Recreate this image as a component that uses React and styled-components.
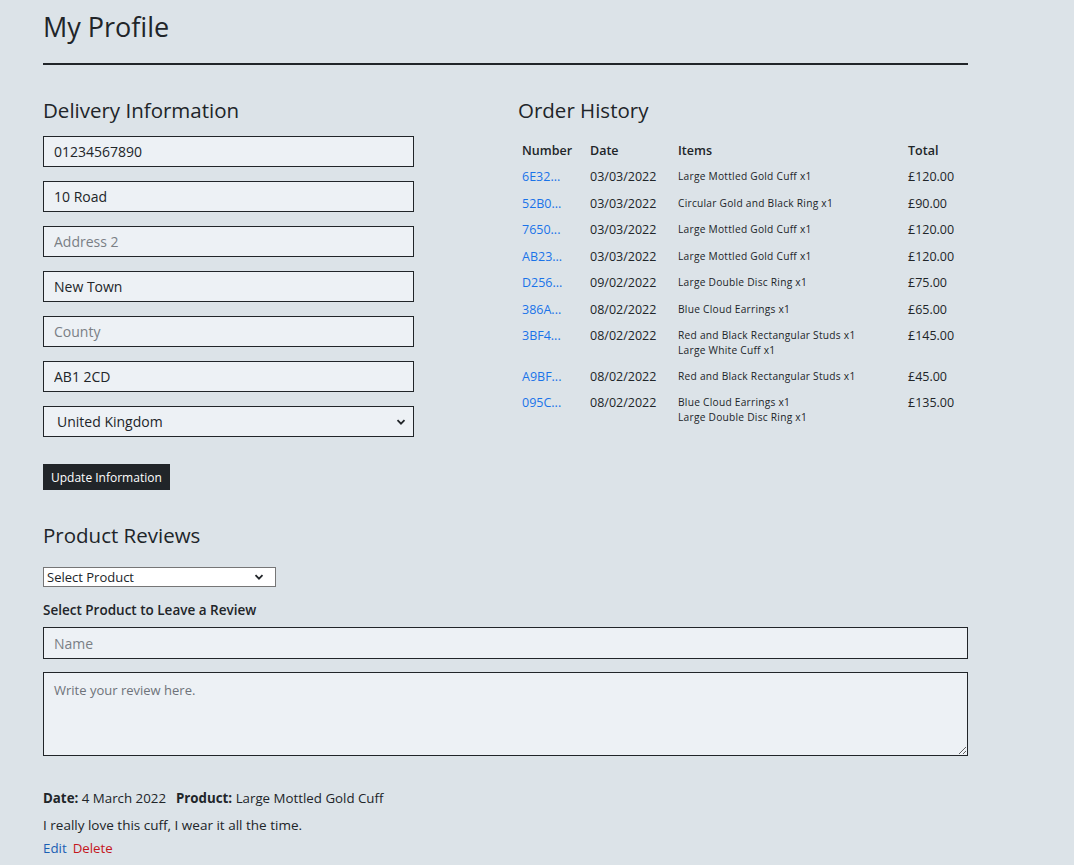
import React from 'react';
import styled, { createGlobalStyle } from 'styled-components';

const GlobalStyle = createGlobalStyle`
  body {
    margin: 0;
    background: #dce3e8;
    font-family: "Open Sans", "Noto Sans", sans-serif;
    color: #212529;
  }
`;

const Page = styled.div`
  width: 925px;
  padding: 8px 0 0 43px;
`;

const Title = styled.h1`
  font-size: 27px;
  font-weight: 400;
  margin: 0;
  line-height: 38px;
`;

const Rule = styled.hr`
  border: 0;
  border-top: 2px solid #212529;
  margin: 17px 0 0;
  opacity: 1;
`;

const Columns = styled.div`
  display: grid;
  grid-template-columns: 475px 1fr;
`;

const Heading = styled.h2`
  font-size: 20.5px;
  font-weight: 400;
  margin: ${p => p.$top || 31}px 0 0;
  line-height: 28px;
`;

const Form = styled.div`
  display: flex;
  flex-direction: column;
  gap: 14px;
  margin-top: 12px;
  width: 371px;
`;

const Field = styled.input`
  box-sizing: border-box;
  width: ${p => p.$wide ? '100%' : '371px'};
  height: ${p => p.$wide ? 32 : 31}px;
  border: 1px solid #212529;
  background: #edf1f5;
  padding: 0 10px;
  font: 14px "Open Sans", sans-serif;
  color: #212529;
  outline: none;
  &::placeholder { color: #7a7f85; }
`;

const Chevron = () => (
  <svg width="12" height="12" viewBox="0 0 12 12">
    <path d="M2.5 4.2 L6 7.7 L9.5 4.2" fill="none" stroke="#212529" strokeWidth="1.8" />
  </svg>
);

const SelectBox = styled.div`
  box-sizing: border-box;
  display: flex;
  align-items: center;
  justify-content: space-between;
  width: ${p => p.$small ? '233px' : '371px'};
  height: ${p => p.$small ? 20 : 31}px;
  border: 1px solid ${p => p.$small ? '#767676' : '#212529'};
  background: ${p => p.$small ? '#ffffff' : '#edf1f5'};
  padding: ${p => p.$small ? '0 10px 0 3px' : '0 6px 0 13px'};
  font-size: ${p => p.$small ? 13 : 14}px;
  color: #212529;
`;

const Button = styled.button`
  align-self: flex-start;
  margin-top: 13px;
  height: 26px;
  padding: 0 8px;
  border: 0;
  background: #212529;
  color: #fff;
  font: 12px "Open Sans", sans-serif;
`;

const Table = styled.table`
  margin-top: 13px;
  width: 450px;
  border-collapse: collapse;
  font-size: 12.5px;
  th {
    text-align: left;
    font-weight: 600;
    padding: 5px 4px 5px;
    font-size: 12.5px;
  }
  td {
    vertical-align: top;
    padding: 4px 4px 5.5px;
    line-height: 17px;
  }
`;

const NumLink = styled.a`
  color: #1a73e8;
  text-decoration: none;
`;

const Items = styled.td`
  && {
    font-size: 10.2px;
    letter-spacing: 0.25px;
    line-height: 15px;
    padding-top: 5px;
  }
`;

const Label = styled.div`
  font-size: 13.5px;
  font-weight: 600;
  margin: 14px 0 8px;
`;

const ReviewArea = styled.textarea`
  box-sizing: border-box;
  display: block;
  width: 100%;
  height: 84px;
  margin-top: 13px;
  border: 1px solid #212529;
  background: #edf1f5;
  padding: 8px 10px;
  font: 13px "Open Sans", sans-serif;
  color: #212529;
  outline: none;
  resize: vertical;
  &::placeholder { color: #6e737a; }
`;

const Meta = styled.div`
  font-size: 13.3px;
  margin-top: 33px;
  b { font-weight: 700; }
  span + span { margin-left: 10px; }
`;

const Body = styled.p`
  font-size: 13.5px;
  margin: 9px 0 0;
`;

const Actions = styled.div`
  font-size: 13.3px;
  margin-top: 5px;
  display: flex;
  gap: 6px;
`;

const Action = styled.a`
  color: ${p => p.$danger ? '#c4161c' : '#1a5fb4'};
  text-decoration: none;
`;

const orders = [
  ['6E32...', '03/03/2022', ['Large Mottled Gold Cuff x1'], '£120.00'],
  ['52B0...', '03/03/2022', ['Circular Gold and Black Ring x1'], '£90.00'],
  ['7650...', '03/03/2022', ['Large Mottled Gold Cuff x1'], '£120.00'],
  ['AB23...', '03/03/2022', ['Large Mottled Gold Cuff x1'], '£120.00'],
  ['D256...', '09/02/2022', ['Large Double Disc Ring x1'], '£75.00'],
  ['386A...', '08/02/2022', ['Blue Cloud Earrings x1'], '£65.00'],
  ['3BF4...', '08/02/2022', ['Red and Black Rectangular Studs x1', 'Large White Cuff x1'], '£145.00'],
  ['A9BF...', '08/02/2022', ['Red and Black Rectangular Studs x1'], '£45.00'],
  ['095C...', '08/02/2022', ['Blue Cloud Earrings x1', 'Large Double Disc Ring x1'], '£135.00'],
];

export default function App() {
  return (
    <Page>
      <GlobalStyle />
      <Title>My Profile</Title>
      <Rule />
      <Columns>
        <div>
          <Heading>Delivery Information</Heading>
          <Form>
            <Field defaultValue="01234567890" />
            <Field defaultValue="10 Road" />
            <Field placeholder="Address 2" />
            <Field defaultValue="New Town" />
            <Field placeholder="County" />
            <Field defaultValue="AB1 2CD" />
            <SelectBox>United Kingdom <Chevron /></SelectBox>
            <Button>Update Information</Button>
          </Form>
        </div>
        <div>
          <Heading>Order History</Heading>
          <Table>
            <colgroup>
              <col style={{ width: 68 }} />
              <col style={{ width: 88 }} />
              <col style={{ width: 230 }} />
              <col />
            </colgroup>
            <thead>
              <tr><th>Number</th><th>Date</th><th>Items</th><th>Total</th></tr>
            </thead>
            <tbody>
              {orders.map(([num, date, items, total]) => (
                <tr key={num}>
                  <td><NumLink href="#">{num}</NumLink></td>
                  <td>{date}</td>
                  <Items>{items.map(i => <div key={i}>{i}</div>)}</Items>
                  <td>{total}</td>
                </tr>
              ))}
            </tbody>
          </Table>
        </div>
      </Columns>
      <Heading $top={31}>Product Reviews</Heading>
      <div style={{ marginTop: 18 }}>
        <SelectBox $small>Select Product <Chevron /></SelectBox>
      </div>
      <Label>Select Product to Leave a Review</Label>
      <Field $wide placeholder="Name" />
      <ReviewArea placeholder="Write your review here." />
      <Meta>
        <span><b>Date:</b> 4 March 2022</span>
        <span><b>Product:</b> Large Mottled Gold Cuff</span>
      </Meta>
      <Body>I really love this cuff, I wear it all the time.</Body>
      <Actions>
        <Action href="#">Edit</Action>
        <Action href="#" $danger>Delete</Action>
      </Actions>
    </Page>
  );
}
